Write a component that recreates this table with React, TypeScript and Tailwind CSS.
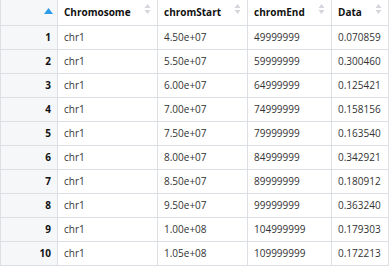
import React from "react";

const rows = [
  ["1", "chr1", "4.50e+07", "49999999", "0.070859"],
  ["2", "chr1", "5.50e+07", "59999999", "0.300460"],
  ["3", "chr1", "6.00e+07", "64999999", "0.125421"],
  ["4", "chr1", "7.00e+07", "74999999", "0.158156"],
  ["5", "chr1", "7.50e+07", "79999999", "0.163540"],
  ["6", "chr1", "8.00e+07", "84999999", "0.342921"],
  ["7", "chr1", "8.50e+07", "89999999", "0.180912"],
  ["8", "chr1", "9.50e+07", "99999999", "0.363240"],
  ["9", "chr1", "1.00e+08", "104999999", "0.179303"],
  ["10", "chr1", "1.05e+08", "109999999", "0.172213"],
];

function SortIcon() {
  return (
    <svg width="7" height="12" viewBox="0 0 7 12" className="absolute right-[6px] top-[3px]">
      <path d="M3.5 1 L6.5 5 L0.5 5 Z" fill="#d3d6da" />
      <path d="M3.5 11 L6.5 7 L0.5 7 Z" fill="#d3d6da" />
    </svg>
  );
}

export default function App() {
  const cols = ["Chromosome", "chromStart", "chromEnd", "Data"];
  const widths = ["w-[100px]", "w-[90px]", "w-[84px]", "w-[57px]"];
  return (
    <div className="w-[392px] h-[266px] bg-white font-['Open_Sans',sans-serif] text-[10px] text-[#333]">
      <table className="border-collapse table-fixed w-[388px] border-l border-b border-r border-[#dcdfe3]">
        <thead>
          <tr className="h-[25px]">
            <th className="w-[57px] bg-[#f5f7f9] relative border-r border-b border-[#dcdfe3]">
              <svg width="9" height="6" viewBox="0 0 9 6" className="absolute left-[43px] top-[8px]">
                <path d="M4.5 0 L9 6 L0 6 Z" fill="#2d9bea" />
              </svg>
            </th>
            {cols.map((c, i) => (
              <th key={c} className={`${widths[i]} relative text-left font-bold pl-[6px] border-r border-b border-[#dcdfe3] text-[#111]`}>
                {c}
                <SortIcon />
              </th>
            ))}
          </tr>
        </thead>
        <tbody>
          {rows.map(r => (
            <tr key={r[0]} className="h-[24px]">
              <td className="bg-[#f5f7f9] text-right font-bold pr-[6px] border-r border-b border-[#dcdfe3] text-[#111]">{r[0]}</td>
              {r.slice(1).map((v, i) => (
                <td key={i} className="pl-[6px] border-r border-b border-[#dcdfe3] whitespace-nowrap">{v}</td>
              ))}
            </tr>
          ))}
        </tbody>
      </table>
    </div>
  );
}
